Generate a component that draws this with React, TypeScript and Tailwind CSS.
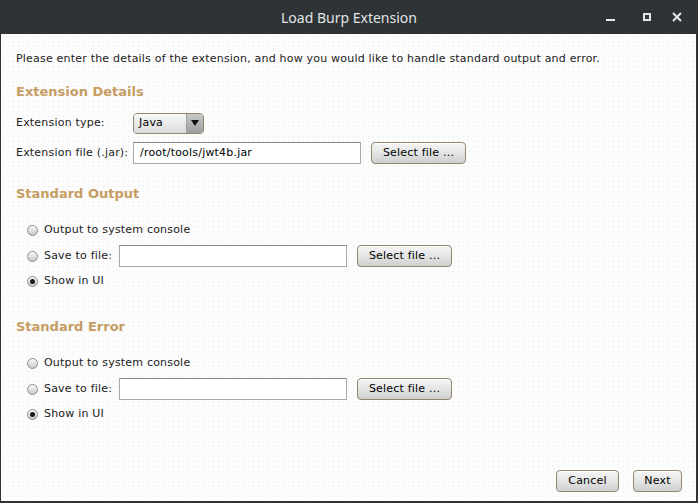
import React from "react";

const dots =
  "bg-[#fcfcfc] bg-[radial-gradient(circle,#e8e8e8_0.6px,transparent_0.8px)] bg-[length:5px_5px]";

function Button({ label, w }: { label: string; w: string }) {
  return (
    <div
      className={`${w} h-[22px] flex items-center justify-center rounded-[4px] border border-[#94856f] bg-gradient-to-b from-[#f6f6f6] via-[#e4e4e4] to-[#cfcfcf] text-black shadow-[inset_0_1px_0_#ffffff]`}
    >
      {label}
    </div>
  );
}

function Radio({ checked }: { checked?: boolean }) {
  return (
    <span className="w-[11px] h-[11px] rounded-full border border-[#8e8e8e] bg-gradient-to-b from-[#fafafa] to-[#c8c8c8] flex items-center justify-center">
      {checked && <span className="w-[5px] h-[5px] rounded-full bg-[#1a1a1a]" />}
    </span>
  );
}

function TextInput({ value }: { value?: string }) {
  return (
    <div className="w-[228px] h-[22px] border border-[#a9a9a9] border-t-[#8a8a8a] bg-white flex items-center pl-[6px] text-black">
      {value}
    </div>
  );
}

function Heading({ children, mt }: { children: React.ReactNode; mt: string }) {
  return (
    <div className={`${mt} h-[16px] flex items-center text-[13px] font-bold tracking-normal text-[#c69d63]`}>
      {children}
    </div>
  );
}

function OutputGroup({ title, mt }: { title: string; mt: string }) {
  return (
    <>
      <Heading mt={mt}>{title}</Heading>
      <div className="mt-[19px] h-[18px] flex items-center pl-[11px] gap-[6px]">
        <Radio />
        <span>Output to system console</span>
      </div>
      <div className="mt-[6px] h-[22px] flex items-center pl-[11px]">
        <Radio />
        <span className="ml-[6px] w-[75px]">Save to file:</span>
        <TextInput />
        <div className="ml-[10px]">
          <Button label="Select file ..." w="w-[95px]" />
        </div>
      </div>
      <div className="mt-[5px] h-[18px] flex items-center pl-[11px] gap-[6px]">
        <Radio checked />
        <span>Show in UI</span>
      </div>
    </>
  );
}

export default function App() {
  return (
    <div
      className="w-[698px] h-[503px] flex flex-col bg-[#2e3336] text-[11px] tracking-[0.2px] text-[#222]"
      style={{ fontFamily: '"DejaVu Sans", sans-serif' }}
    >
      {/* Title bar */}
      <div className="h-[34px] relative flex items-center justify-center shrink-0">
        <span
          className="text-[14px] tracking-normal text-[#e2e4e5]"
          style={{ fontFamily: '"Noto Sans", sans-serif' }}
        >
          Load Burp Extension
        </span>
        <div className="absolute right-0 top-0 h-full flex items-center text-[#e8e8e8]">
          <span className="w-[9px] h-[2px] bg-[#e8e8e8] mt-[6px] mr-[28px]" />
          <span className="w-[8px] h-[8px] border-2 border-[#e8e8e8] mr-[21px]" />
          <svg width="10" height="10" viewBox="0 0 10 10" className="mr-[16px]">
            <path d="M1 1L9 9M9 1L1 9" stroke="#e8e8e8" strokeWidth="2" />
          </svg>
        </div>
      </div>

      {/* Body */}
      <div className={`flex-1 flex flex-col ml-px mr-[2px] mb-[2px] pl-[15px] pr-[14px] pb-[9px] ${dots}`}>
        <div className="mt-[19px] h-[13px] flex items-center">
          Please enter the details of the extension, and how you would like to handle standard output and error.
        </div>

        <Heading mt="mt-[18px]">Extension Details</Heading>

        <div className="mt-[13px] h-[20px] flex items-center">
          <span className="w-[117px]">Extension type:</span>
          <div className="w-[71px] h-[21px] rounded-[4px] border border-[#94856f] flex overflow-hidden">
            <div className="flex-1 flex items-center pl-[5px] text-black bg-gradient-to-b from-[#f8f8f8] to-[#dcdcdc]">
              Java
            </div>
            <div className="w-[17px] flex items-center justify-center bg-gradient-to-b from-[#c8c8c8] to-[#9e9e9e] border-l border-[#a0a0a0]">
              <svg width="8" height="6" viewBox="0 0 8 6">
                <path d="M0 0H8L4 6Z" fill="#111" />
              </svg>
            </div>
          </div>
        </div>

        <div className="mt-[9px] h-[22px] flex items-center">
          <span className="w-[117px]">Extension file (.jar):</span>
          <TextInput value="/root/tools/jwt4b.jar" />
          <div className="ml-[10px]">
            <Button label="Select file ..." w="w-[95px]" />
          </div>
        </div>

        <OutputGroup title="Standard Output" mt="mt-[22px]" />
        <OutputGroup title="Standard Error" mt="mt-[29px]" />

        <div className="mt-auto flex justify-end gap-[14px]">
          <Button label="Cancel" w="w-[63px]" />
          <Button label="Next" w="w-[49px]" />
        </div>
      </div>
    </div>
  );
}
